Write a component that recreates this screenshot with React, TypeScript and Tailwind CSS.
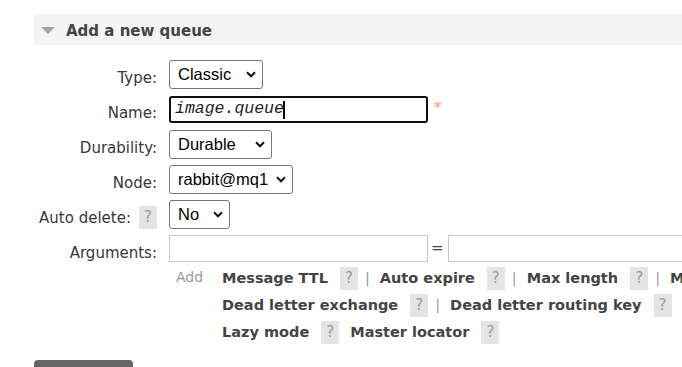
import type { ReactNode } from 'react';

const sans = 'font-["DejaVu_Sans",Verdana,sans-serif]';

function Help({ className = '' }: { className?: string }) {
  return (
    <span
      className={`inline-flex h-[23px] w-[18px] shrink-0 items-center justify-center bg-[#e4e4e4] text-[15px] leading-none text-[#999] ${className}`}
    >
      ?
    </span>
  );
}

function Chevron() {
  return (
    <svg width="10" height="7" viewBox="0 0 10 7" className="shrink-0">
      <polyline points="1,1.3 5,5.3 9,1.3" fill="none" stroke="#111" strokeWidth="2" />
    </svg>
  );
}

function FakeSelect({ value, width }: { value: string; width: string }) {
  return (
    <div
      className={`flex h-[29px] items-center justify-between rounded-[3px] border border-[#767676] bg-white pl-[8px] pr-[6px] font-["Liberation_Sans",Arial,sans-serif] text-[16.5px] text-black ${width}`}
    >
      <span>{value}</span>
      <Chevron />
    </div>
  );
}

function Row({ label, children }: { label: ReactNode; children: ReactNode }) {
  return (
    <div className="flex h-[29px] items-start">
      <div className="flex w-[123px] shrink-0 justify-end pt-[9px] text-[15px] leading-[18px] text-[#383838]">
        {label}
      </div>
      <div className="ml-[12px] flex h-full items-center">{children}</div>
    </div>
  );
}

function ArgLink({ text, pipe = true }: { text: string; pipe?: boolean }) {
  return (
    <>
      <span className="font-bold text-[#444]">{text}</span>
      <Help className="ml-[12px] font-normal" />
      {pipe ? (
        <span className="ml-[7px] mr-[10px] text-[#999]">|</span>
      ) : (
        <span className="w-[11px]" />
      )}
    </>
  );
}

export default function App() {
  return (
    <div className={`relative h-[367px] w-[682px] overflow-hidden bg-white ${sans}`}>
      <div className="w-[1100px] pl-[34px] pt-[14px]">
        {/* section header */}
        <div className="flex h-[31px] items-center bg-[#f4f4f4]">
          <svg width="14" height="7" viewBox="0 0 14 7" className="ml-[7px] mt-[1px]">
            <polygon points="0,0 14,0 7,7" fill="#a3a3a3" />
          </svg>
          <span className="ml-[11px] mt-[3px] text-[15px] font-bold text-[#444]">Add a new queue</span>
        </div>

        <div className="mt-[15px] flex flex-col gap-[6px]">
          <Row label="Type:">
            <FakeSelect value="Classic" width="w-[94px]" />
          </Row>

          <Row label="Name:">
            <div className="flex h-[27px] w-[259px] items-center rounded-[3px] border-2 border-[#101010] bg-white pl-[4px] font-['Liberation_Mono','Courier_New',monospace] text-[16.5px] italic text-[#222]">
              <span>image.queue</span>
              <span className="ml-[-1px] h-[18px] w-[2px] bg-black" />
            </div>
            <span className="ml-[6px] self-start mt-[4px] text-[15px] leading-[18px] text-[#ff8f8f]">*</span>
          </Row>

          <Row label="Durability:">
            <FakeSelect value="Durable" width="w-[103px]" />
          </Row>

          <Row label="Node:">
            <FakeSelect value="rabbit@mq1" width="w-[124px]" />
          </Row>

          <Row
            label={
              <>
                <span>Auto delete:</span>
                <Help className="ml-[8px] mt-[-3px]" />
              </>
            }
          >
            <FakeSelect value="No" width="w-[61px]" />
          </Row>

          <Row label="Arguments:">
            <div className="flex items-center self-start">
              <div className="h-[27px] w-[259px] border border-[#c8c8c8] bg-white" />
              <span className="ml-[3px] w-[17px] text-[15px] text-[#444]">=</span>
              <div className="h-[27px] w-[259px] border border-[#c8c8c8] bg-white" />
            </div>
          </Row>
        </div>

        {/* argument shortcuts */}
        <div className="ml-[135px] mt-[1px] flex text-[14.5px]">
          <div className="w-[53px] shrink-0 pl-[7px] text-[14px] leading-[24px] text-[#999]">Add</div>
          <div className="flex flex-col">
            <div className="flex h-[27px] items-center whitespace-nowrap">
              <ArgLink text="Message TTL" />
              <ArgLink text="Auto expire" />
              <ArgLink text="Max length" />
              <ArgLink text="Max length bytes" />
              <ArgLink text="Overflow behaviour" pipe={false} />
            </div>
            <div className="flex h-[27px] items-center whitespace-nowrap">
              <ArgLink text="Dead letter exchange" />
              <ArgLink text="Dead letter routing key" pipe={false} />
            </div>
            <div className="flex h-[27px] items-center whitespace-nowrap">
              <ArgLink text="Lazy mode" pipe={false} />
              <ArgLink text="Master locator" pipe={false} />
            </div>
          </div>
        </div>

        <button
          type="button"
          className="mt-[14px] h-[30px] w-[99px] rounded-t-[4px] bg-[#666] text-[15px] font-bold text-white"
        >
          Add queue
        </button>
      </div>
    </div>
  );
}
